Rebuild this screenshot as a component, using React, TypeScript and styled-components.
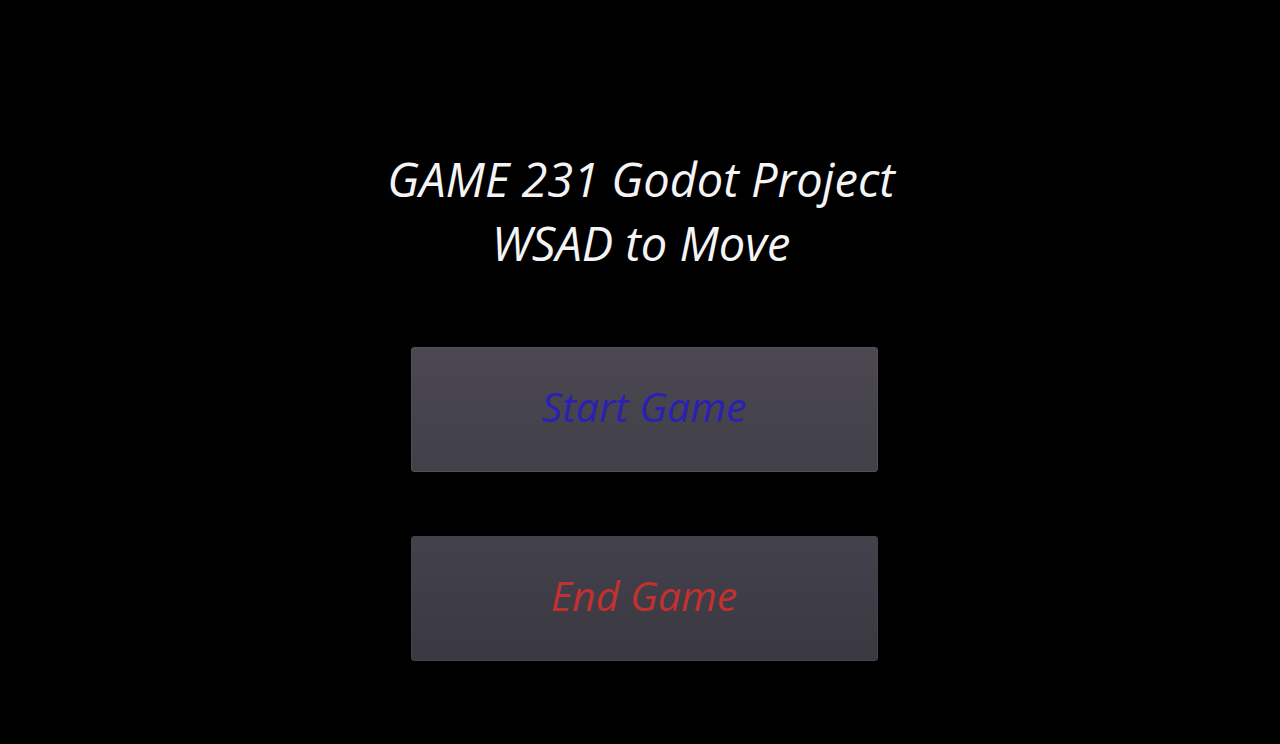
import styled, { createGlobalStyle } from "styled-components"

const GlobalStyle = createGlobalStyle`
  html, body {
    margin: 0;
    background: #000;
  }
  body {
    font-family: "Open Sans", "Noto Sans", sans-serif;
  }
`

const Screen = styled.main`
  width: 1280px;
  height: 744px;
  display: flex;
  flex-direction: column;
  align-items: center;
  padding-top: 147px;
  box-sizing: border-box;
`

const Title = styled.h1`
  margin: 0 0 72px 2px;
  color: #f4f4f4;
  font-size: 47px;
  font-style: italic;
  font-weight: 400;
  line-height: 64px;
  text-align: center;
`

const Menu = styled.div`
  display: flex;
  flex-direction: column;
  gap: 64px;
  padding-left: 8px;
`

const MenuButton = styled.button<{ $tone: string; $dark?: boolean }>`
  width: 467px;
  height: 125px;
  padding: 0 0 8px;
  border: 1px solid ${p => (p.$dark ? "#45434c" : "#524f59")};
  border-radius: 3px;
  background: ${p =>
    p.$dark
      ? "linear-gradient(#43414b, #3a3942)"
      : "linear-gradient(#4b4852, #413f48)"};
  color: ${p => p.$tone};
  font-family: inherit;
  font-size: 41px;
  font-style: italic;
  cursor: pointer;
`

export default function App() {
  return (
    <>
      <GlobalStyle />
      <Screen>
        <Title>
          GAME 231 Godot Project
          <br />
          WSAD to Move
        </Title>
        <Menu>
          <MenuButton $tone="#2b20b4">Start Game</MenuButton>
          <MenuButton $tone="#c2302f" $dark>End Game</MenuButton>
        </Menu>
      </Screen>
    </>
  )
}
